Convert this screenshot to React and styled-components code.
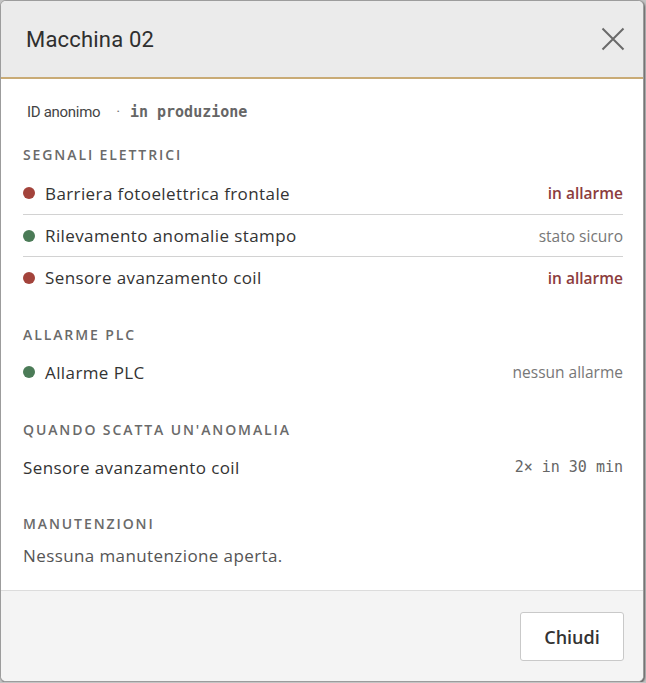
import React from "react";
import styled, { createGlobalStyle } from "styled-components";

const Global = createGlobalStyle`
  html, body { margin: 0; padding: 0; }
  body {
    background: #c4c4c4;
    font-family: "Open Sans", "Noto Sans", sans-serif;
    color: #333;
  }
  * { box-sizing: border-box; }
`;

const Dialog = styled.div`
  width: 644px;
  height: 682px;
  display: flex;
  flex-direction: column;
  background: #fff;
  border: 1px solid #9c9c9c;
  border-radius: 6px;
  overflow: hidden;
  box-shadow: 1px 1px 2px rgba(0, 0, 0, 0.55);
`;

const Header = styled.header`
  height: 78px;
  flex: none;
  display: flex;
  align-items: center;
  justify-content: space-between;
  padding: 0 17px 0 25px;
  background: #ebebeb;
  border-bottom: 2px solid #c9ab76;
`;

const Title = styled.h2`
  margin: 0;
  font-family: Roboto, "Liberation Sans", sans-serif;
  font-weight: 400;
  font-size: 22px;
  letter-spacing: 0.2px;
  color: #2f2f2f;
`;

const CloseButton = styled.button`
  border: 0;
  background: none;
  padding: 0;
  width: 26px;
  height: 26px;
  display: flex;
  align-items: center;
  justify-content: center;
  cursor: pointer;
  color: #6a6a6a;
`;

const Body = styled.main`
  flex: 1;
  padding: 23px 20px 0 22px;
`;

const Meta = styled.div`
  display: flex;
  align-items: center;
  height: 20px;
  margin-left: 4px;
  font-family: Roboto, "Liberation Sans", sans-serif;
  font-size: 15px;
  letter-spacing: -0.3px;
  color: #444;
`;

const Sep = styled.span`
  margin: 0 10px 0 16px;
  color: #777;
`;

const Mono = styled.span`
  font-family: "DejaVu Sans Mono", "Liberation Mono", monospace;
  font-size: 15px;
  font-weight: ${(p) => p.$weight || 600};
  letter-spacing: 0;
  color: #666;
`;

const Section = styled.section`
  margin-top: ${(p) => p.$gap}px;
`;

const Heading = styled.h3`
  margin: 0;
  height: 18px;
  line-height: 18px;
  font-size: 14px;
  font-weight: 600;
  letter-spacing: 1.9px;
  text-transform: uppercase;
  color: #6a6a6a;
`;

const List = styled.ul`
  list-style: none;
  margin: ${(p) => p.$top ?? 8}px 0 0;
  padding: 0;
`;

const Row = styled.li`
  height: 42px;
  display: flex;
  align-items: center;
  gap: 10px;
  & + & {
    border-top: 1px solid #d2d2d2;
  }
`;

const Dot = styled.span`
  width: 12px;
  height: 12px;
  border-radius: 50%;
  flex: none;
  background: ${(p) => (p.$alarm ? "#a3433b" : "#4b7b57")};
`;

const Label = styled.span`
  flex: 1;
  font-size: 17px;
  letter-spacing: 0.4px;
  color: #333;
`;

const Status = styled.span`
  font-size: 15.5px;
  font-weight: ${(p) => (p.$alarm ? 600 : 400)};
  color: ${(p) => (p.$alarm ? "#8c3d3d" : "#777")};
`;

const Note = styled.p`
  margin: 11px 0 0;
  font-size: 17px;
  letter-spacing: 0.4px;
  color: #555;
`;

const Footer = styled.footer`
  height: 91px;
  flex: none;
  display: flex;
  align-items: flex-start;
  justify-content: flex-end;
  padding: 21px 19px 0;
  background: #f4f4f4;
  border-top: 1px solid #dcdcdc;
`;

const Button = styled.button`
  width: 104px;
  height: 49px;
  background: #fff;
  border: 1px solid #c9c9c9;
  border-radius: 3px;
  font-family: "Open Sans", "Noto Sans", sans-serif;
  font-size: 18px;
  font-weight: 600;
  color: #333;
  cursor: pointer;
`;

const signals = [
  { label: "Barriera fotoelettrica frontale", alarm: true },
  { label: "Rilevamento anomalie stampo", alarm: false },
  { label: "Sensore avanzamento coil", alarm: true },
];

export default function App() {
  return (
    <>
      <Global />
      <Dialog role="dialog" aria-label="Macchina 02">
        <Header>
          <Title>Macchina 02</Title>
          <CloseButton aria-label="Chiudi">
            <svg width="24" height="24" viewBox="0 0 24 24" fill="none" stroke="currentColor" strokeWidth="2">
              <path d="M1.5 1.5l21 21M22.5 1.5l-21 21" />
            </svg>
          </CloseButton>
        </Header>
        <Body>
          <Meta>
            ID anonimo
            <Sep>·</Sep>
            <Mono $weight={700}>in produzione</Mono>
          </Meta>

          <Section $gap={24}>
            <Heading>Segnali elettrici</Heading>
            <List>
              {signals.map((s) => (
                <Row key={s.label}>
                  <Dot $alarm={s.alarm} />
                  <Label>{s.label}</Label>
                  <Status $alarm={s.alarm}>{s.alarm ? "in allarme" : "stato sicuro"}</Status>
                </Row>
              ))}
            </List>
          </Section>

          <Section $gap={28}>
            <Heading>Allarme PLC</Heading>
            <List $top={7}>
              <Row>
                <Dot />
                <Label>Allarme PLC</Label>
                <Status>nessun allarme</Status>
              </Row>
            </List>
          </Section>

          <Section $gap={28}>
            <Heading>Quando scatta un'anomalia</Heading>
            <List $top={7}>
              <Row>
                <Label>Sensore avanzamento coil</Label>
                <Mono $weight={500}>2× in 30 min</Mono>
              </Row>
            </List>
          </Section>

          <Section $gap={27}>
            <Heading>Manutenzioni</Heading>
            <Note>Nessuna manutenzione aperta.</Note>
          </Section>
        </Body>
        <Footer>
          <Button>Chiudi</Button>
        </Footer>
      </Dialog>
    </>
  );
}
